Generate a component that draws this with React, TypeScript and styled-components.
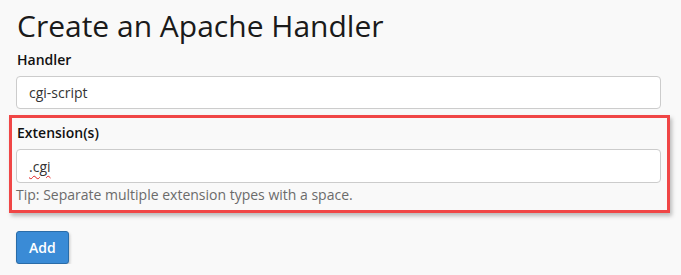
import styled, { createGlobalStyle } from "styled-components";

const GlobalStyle = createGlobalStyle`
  html, body {
    margin: 0;
    padding: 0;
    background: #f9f9f9;
    font-family: "Open Sans", "Liberation Sans", sans-serif;
    color: #111;
  }
  * { box-sizing: border-box; }
`;

const Page = styled.div`
  padding: 0 20px 0 16px;
  width: 681px;
`;

const Title = styled.h1`
  font-size: 30px;
  font-weight: 400;
  margin: 0;
  padding: 6px 0 0 1px;
  line-height: 40px;
  color: #1a1a1a;
`;

const Group = styled.div<{ highlight?: boolean }>`
  display: flex;
  flex-direction: column;
  ${(p) =>
    p.highlight &&
    `
    margin: 6px -9px 0 -7px;
    padding: 1px 6px 5px 4px;
    border: 3px solid #f04646;
    box-shadow: 2px 3px 4px rgba(0, 0, 0, 0.25);
  `}
`;

const Label = styled.label`
  font-size: 14px;
  font-weight: 600;
  line-height: 20px;
  margin: 4px 0 6px 1px;
`;

const Input = styled.div<{ tall?: boolean }>`
  height: ${(p) => (p.tall ? "34px" : "33px")};
  background: #fff;
  border: 1px solid #ccc;
  border-radius: 4px;
  padding: 0 12px;
  display: flex;
  align-items: center;
  font-size: 14px;
  color: #333;
`;

const Misspelled = styled.span`
  text-decoration: underline wavy #e02020;
  text-decoration-thickness: 1px;
  text-underline-offset: 3px;
`;

const Tip = styled.div`
  font-size: 14px;
  color: #6b6b6b;
  margin-top: 2px;
  line-height: 20px;
`;

const Button = styled.button`
  margin-top: 18px;
  height: 33px;
  padding: 0 12px;
  background: #3a8bd6;
  border: 1px solid #2a6ca8;
  border-radius: 3px;
  color: #fff;
  font-family: inherit;
  font-size: 14px;
  font-weight: 600;
  box-shadow: 1px 2px 3px rgba(0, 0, 0, 0.2);
`;

export default function App() {
  return (
    <>
      <GlobalStyle />
      <Page>
        <Title>Create an Apache Handler</Title>
        <Group>
          <Label>Handler</Label>
          <Input>cgi-script</Input>
        </Group>
        <Group highlight>
          <Label>Extension(s)</Label>
          <Input tall>
            <Misspelled>.cgi</Misspelled>
          </Input>
          <Tip>Tip: Separate multiple extension types with a space.</Tip>
        </Group>
        <Button>Add</Button>
      </Page>
    </>
  );
}
